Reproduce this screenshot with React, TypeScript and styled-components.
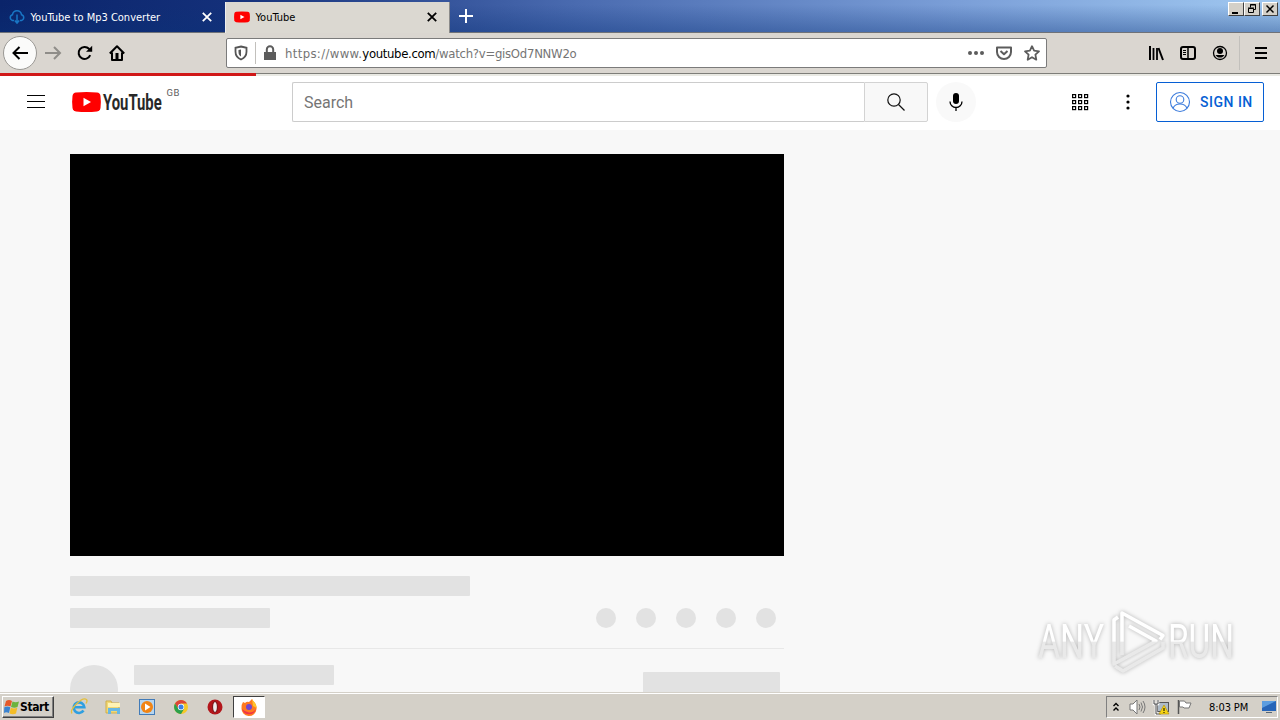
import React from 'react';
import styled, { createGlobalStyle } from 'styled-components';

const Global = createGlobalStyle`
  *{box-sizing:border-box}
  body{margin:0;overflow:hidden;background:#f8f8f8;}
  svg{display:block;overflow:visible;flex:none}
`;
const tahoma = `"DejaVu Sans Condensed","DejaVu Sans",sans-serif`;

const Screen = styled.div`width:1280px;height:720px;display:flex;flex-direction:column;overflow:hidden;position:relative;font-family:${tahoma};`;
const TitleBar = styled.div`
  height:33px;display:flex;flex:none;border-bottom:1px solid #6f7278;
  background:linear-gradient(180deg,rgba(10,36,106,0) 0%,rgba(10,36,106,0) 15%,rgba(10,50,120,.38) 100%),linear-gradient(90deg,#0a246a 0%,#14307a 18%,#4a6bb0 45%,#7b9fd8 75%,#a0c8f0 100%);
`;
const Tab = styled.div<{ $active?: boolean }>`
  width:225px;display:flex;align-items:center;padding:2px 13px 0 9px;font-size:11px;
  color:${p => (p.$active ? '#000' : '#fff')};
  ${p => p.$active && 'background:#dbd8d1;height:33px;margin-top:2px;padding:0 12px 3px 8px;border-left:1px solid #eee;border-right:1px solid #8a8a8a;'}
`;
const TabTitle = styled.span<{ $gap: number }>`flex:1;margin-left:${p => p.$gap}px;white-space:nowrap;`;
const NewTab = styled.div`padding:9px 0 0 9px;flex:1;`;
const WindowButtons = styled.div`display:flex;padding:2px 2px 0 0;`;
const WinButton = styled.div<{ $gap?: boolean }>`
  width:16px;height:14px;background:#d4d0c8;border:1px solid;border-color:#fff #404040 #404040 #fff;
  margin-left:${p => (p.$gap ? 2 : 0)}px;display:flex;align-items:center;justify-content:center;
`;
const Toolbar = styled.div`
  height:41px;flex:none;display:flex;align-items:center;background:#dad6d0;border-bottom:1px solid #7e7e79;padding-left:3px;
`;
const ToolButton = styled.div<{ $w?: number }>`width:${p => p.$w ?? 32}px;height:${p => p.$w ?? 33}px;display:flex;align-items:center;justify-content:center;`;
const BackButton = styled(ToolButton)`border-radius:50%;background:#fbfbfa;border:1px solid #9a9894;`;
const AddressBar = styled.div`
  width:821px;height:30px;margin:0 93px;background:#fff;border:1px solid #7b7b7b;border-radius:2px;display:flex;align-items:center;padding:0 6px;
`;
const Divider = styled.div<{ $h: number; $m: string }>`width:1px;height:${p => p.$h}px;background:#c2c0bc;margin:${p => p.$m};`;
const Url = styled.div`flex:1;margin-left:7px;font-size:13px;color:#757575;white-space:nowrap;display:flex;`;
const UrlPart = styled.span<{ $spacing: number; $strong?: boolean }>`letter-spacing:${p => p.$spacing}px;${p => p.$strong && 'color:#000;'}`;
const AddressActions = styled.div`display:flex;gap:12px;`;
const Header = styled.header`height:56px;flex:none;background:#fff;border-top:2px solid #e9e9e3;display:flex;align-items:center;position:relative;padding:0 16px 2px 27px;`;
const Progress = styled.div`position:absolute;left:0;top:-3px;width:256px;height:3px;background:#d01818;`;
const Logo = styled.div`margin-left:27px;width:108px;display:flex;align-items:center;position:relative;`;
const Country = styled.span`position:absolute;left:94.500px;top:-4px;font:9.500px/9px Roboto,sans-serif;color:#606060;letter-spacing:.5px;`;
const SearchBox = styled.div`margin-left:112px;width:572px;height:40px;border:1px solid #ccc;border-right:0;border-radius:2px 0 0 2px;padding-left:11px;font:16px/39px Roboto,sans-serif;color:#757575;`;
const SearchButton = styled.div`width:64px;height:40px;background:#f8f8f8;border:1px solid #d3d3d3;border-radius:0 2px 2px 0;display:flex;align-items:center;justify-content:center;`;
const Mic = styled.div`width:40px;height:40px;border-radius:50%;background:#f9f9f9;margin-left:8px;display:flex;align-items:center;justify-content:center;`;
const HeaderActions = styled.div`margin-left:auto;display:flex;align-items:center;`;
const SignIn = styled.div`width:108px;height:40px;margin-left:16px;border:1px solid #065fd4;border-radius:2px;display:flex;align-items:center;padding-left:11px;gap:8px;font:500 14px Roboto,sans-serif;letter-spacing:.5px;color:#065fd4;white-space:nowrap;`;
const Page = styled.main`flex:1;min-height:0;overflow:hidden;background:#f8f8f8;padding:24px 0 0 70px;`;
const Column = styled.div`width:714px;`;
const Player = styled.div`height:402px;background:#000;margin-bottom:20px;`;
const Block = styled.div<{ $w: number; $h?: number }>`width:${p => p.$w}px;height:${p => p.$h ?? 20}px;background:#e2e2e2;border-radius:1px;`;
const MetaRow = styled.div`display:flex;justify-content:space-between;margin-top:12px;padding-right:8px;`;
const Dots = styled.div`display:flex;gap:20px;`;
const Circle = styled.div<{ $d: number }>`width:${p => p.$d}px;height:${p => p.$d}px;border-radius:50%;background:#e2e2e2;`;
const OwnerRow = styled.div`display:flex;margin-top:20px;border-top:1px solid #e8e8e8;padding:16px 4px 0 0;`;
const OwnerName = styled.div`margin-left:16px;flex:1;`;
const Subscribe = styled.div`padding-top:7px;`;
const Taskbar = styled.footer`height:28px;flex:none;background:#d4d0c8;border-top:1px solid #d4d0c8;box-shadow:inset 0 1px #fff;display:flex;align-items:center;padding:1px 2px 0;`;
const Start = styled.div`width:52px;height:22px;background:#d4d0c8;border:1px solid;border-color:#fff #404040 #404040 #fff;box-shadow:inset -1px -1px #808080;display:flex;align-items:center;padding-left:1px;gap:1px;font:bold 12px ${tahoma};letter-spacing:-.4px;white-space:nowrap;`;
const Launch = styled.div`display:flex;margin-left:8px;`;
const TaskIcon = styled.div<{ $active?: boolean }>`
  width:34px;height:22px;display:flex;align-items:center;justify-content:center;
  ${p => p.$active && 'width:32px;margin-left:1px;background:#fff;border:1px solid;border-color:#404040 #fff #fff #404040;'}
`;
const Tray = styled.div`margin-left:auto;width:172px;height:22px;border:1px solid;border-color:#808080 #fff #fff #808080;display:flex;align-items:center;padding-left:5px;`;
const TrayItem = styled.div<{ $gap: number }>`margin-left:${p => p.$gap}px;`;
const Clock = styled.span`font-size:11px;letter-spacing:-.1px;width:44px;margin-left:17px;white-space:nowrap;`;
const MenuDots = styled.div`margin:0 10px 0 38px;`;
const Watermark = styled.div`position:absolute;left:1030px;top:602px;filter:drop-shadow(0 0 2px rgba(0,0,0,.28));`;

const Close = ({ c }: { c: string }) => <svg width="10" height="10" viewBox="0 0 10 10"><path d="M.8.8l8.4 8.4M9.200.8L.8 9.200" stroke={c} strokeWidth="1.800" /></svg>;
const Arrow = ({ c, flip }: { c: string; flip?: boolean }) => (
  <svg width="16" height="14" viewBox="0 0 16 14"><path d={flip ? 'M0 7h15M9 1l6 6-6 6' : 'M16 7H1.500M7.500 1l-6 6 6 6'} fill="none" stroke={c} strokeWidth="2" /></svg>
);
const Play = ({ w, h }: { w: number; h: number }) => (
  <svg width={w} height={h} viewBox="0 0 29 20"><path d="M4 .6Q14.500-.6 25 .6q3 .4 3.500 3.400.8 6 0 12-.5 3-3.500 3.400-10.500 1.200-21 0-3-.4-3.500-3.400-.8-6 0-12Q1 1 4 .6z" fill="#f00" /><path d="M11.500 5.700v8.600L19 10z" fill="#fff" /></svg>
);

export default function App() {
  return (
    <Screen>
      <Global />
      <TitleBar>
        <Tab>
          <svg width="16" height="14" viewBox="0 0 16 14" fill="none" stroke="#1976c5" strokeWidth="1.500"><path d="M5 10.500H3.500a3 3 0 010-5.800C4 2 6 .8 8 .8s4 1.200 4.500 3.900a3 3 0 010 5.800H11M8 4.500V13M5.800 10.500L8 13l2.200-2.500" /></svg>
          <TabTitle $gap={5.500}>YouTube to Mp3 Converter</TabTitle><Close c="#fff" />
        </Tab>
        <Tab $active><Play w={16} h={12} /><TabTitle $gap={5.500}>YouTube</TabTitle><Close c="#000" /></Tab>
        <NewTab><svg width="14" height="14" viewBox="0 0 14 14"><path d="M7 0v14M0 7h14" stroke="#fff" strokeWidth="2" /></svg></NewTab>
        <WindowButtons>
          <WinButton><svg width="10" height="9"><path d="M1 7h6v2H1z" /></svg></WinButton>
          <WinButton><svg width="10" height="10" fill="none" stroke="#000"><path d="M3.500 3.500v-3h5v5h-2M3 1h6M1.500 4.500h5v4h-5zM1 4h6" /></svg></WinButton>
          <WinButton $gap><svg width="8" height="8"><path d="M.5.5l7 7M7.500.5l-7 7" stroke="#000" strokeWidth="1.500" /></svg></WinButton>
        </WindowButtons>
      </TitleBar>
      <Toolbar>
        <BackButton $w={34}><Arrow c="#000" /></BackButton>
        <ToolButton><Arrow c="#8f8d89" flip /></ToolButton>
        <ToolButton><svg width="16" height="16" viewBox="0 0 16 16"><path d="M13.200 10.200A6 6 0 1112 3.800l1.500 1.500" fill="none" stroke="#000" strokeWidth="2" /><path d="M15.200.8v6H9z" /></svg></ToolButton>
        <ToolButton><svg width="16" height="16" viewBox="0 0 16 16"><path d="M.8 8.500L8 1.300l7.200 7.200M3 7.500V15h10V7.500" fill="none" stroke="#000" strokeWidth="2" strokeLinejoin="round" /><path d="M6.500 8h3v7h-3z" /></svg></ToolButton>
        <AddressBar>
          <svg width="16" height="16" viewBox="0 0 16 16"><path d="M8 1.500l5.500 1.300v4c0 3.500-2 6.200-5.500 7.700-3.500-1.500-5.500-4.200-5.500-7.700v-4z" fill="none" stroke="#555" strokeWidth="1.800" /><path d="M8 4.500L5.500 5v2c0 2 .8 3.500 2.500 4.500z" fill="#555" /></svg>
          <Divider $h={22} $m="0 6px" />
          <svg width="16" height="16" viewBox="0 0 16 16"><path d="M2 7h12v8H2z" fill="#5c5c5c" /><path d="M4.800 8V4.500a3.200 3.200 0 016.400 0V8" fill="none" stroke="#5c5c5c" strokeWidth="2" /></svg>
          <Url><UrlPart $spacing={0.35}>https://www.</UrlPart><UrlPart $spacing={-0.35} $strong>youtube.com</UrlPart><UrlPart $spacing={-0.27}>/watch?v=gisOd7NNW2o</UrlPart></Url>
          <AddressActions>
            <svg width="16" height="16" fill="#5c5c5c"><circle cx="2" cy="8" r="2" /><circle cx="8" cy="8" r="2" /><circle cx="14" cy="8" r="2" /></svg>
            <svg width="16" height="16" fill="none" stroke="#5c5c5c" strokeWidth="2"><path d="M1 2.500h14V7A7 7 0 011 7zM4.500 6L8 9.300 11.500 6" strokeLinejoin="round" /></svg>
            <svg width="16" height="16" fill="none" stroke="#5c5c5c" strokeWidth="1.800"><path d="M8 1.200l2.100 4.500 4.900.6-3.600 3.400.9 5L8 12.200l-4.300 2.500.9-5L1 6.300l4.900-.6z" strokeLinejoin="round" /></svg>
          </AddressActions>
        </AddressBar>
        <ToolButton><svg width="16" height="16" stroke="#000" strokeWidth="2"><path d="M2 1v14" /><path d="M5.500 3v12M9 3v12" strokeWidth="1.800" /><path d="M10.500 3l4.500 12" /></svg></ToolButton>
        <ToolButton><svg width="16" height="16" fill="none" stroke="#000"><rect x="1" y="2" width="14" height="12" rx="2" strokeWidth="2" /><path d="M8 2v12" strokeWidth="1.500" /><path d="M3 5.500h3M3 7.500h3M3 9.500h3" /></svg></ToolButton>
        <ToolButton><svg width="16" height="16"><circle cx="8" cy="8" r="6.500" fill="none" stroke="#000" strokeWidth="1.300" /><circle cx="8" cy="6" r="3" /><path d="M3.500 10h9a5.200 5.200 0 01-9 0z" /></svg></ToolButton>
        <Divider $h={34} $m="0 5px 0 3px" />
        <ToolButton><svg width="12" height="12"><path d="M0 1h12M0 6h12M0 11h12" stroke="#000" strokeWidth="2" /></svg></ToolButton>
      </Toolbar>
      <Header>
        <Progress />
        <svg width="18" height="14"><path d="M0 .5h18M0 6.500h18M0 12.500h18" stroke="#030303" /></svg>
        <Logo>
          <Play w={29} h={20} />
          <svg width="60" height="20"><text transform="translate(2 17.500) scale(.675 1)" fontFamily="Roboto" fontWeight="700" fontSize="22" fill="#282828">YouTube</text></svg>
          <Country>GB</Country>
        </Logo>
        <SearchBox>Search</SearchBox>
        <SearchButton><svg width="18" height="18" fill="none" stroke="#111" strokeWidth="1.200"><circle cx="7" cy="7" r="6.200" /><path d="M11.500 11.500l6 6" /></svg></SearchButton>
        <Mic><svg width="14" height="18"><rect x="4" y="0" width="6" height="11" rx="3" /><path d="M1 8.500a6 6 0 0012 0M7 14.500V18" fill="none" stroke="#000" strokeWidth="1.300" /></svg></Mic>
        <HeaderActions>
          <svg width="16" height="16" fill="none" stroke="#000" strokeWidth="1.200">{[0, 6, 12].flatMap(y => [0, 6, 12].map(x => <rect key={`${x}-${y}`} x={x + .6} y={y + .6} width="3" height="3" />))}</svg>
          <MenuDots><svg width="4" height="16"><circle cx="2" cy="2" r="1.600" /><circle cx="2" cy="8" r="1.600" /><circle cx="2" cy="14" r="1.600" /></svg></MenuDots>
          <SignIn>
            <svg width="24" height="24" fill="none" stroke="#3b7bdc" strokeWidth="1.100"><circle cx="12" cy="12" r="9.500" /><circle cx="12" cy="9.500" r="3.800" /><path d="M5 18.500c1-3 4-4.500 7-4.500s6 1.500 7 4.500" /></svg>
            SIGN IN
          </SignIn>
        </HeaderActions>
      </Header>
      <Page>
        <Column>
          <Player />
          <Block $w={400} />
          <MetaRow><Block $w={200} /><Dots>{[0, 1, 2, 3, 4].map(i => <Circle key={i} $d={20} />)}</Dots></MetaRow>
          <OwnerRow><Circle $d={48} /><OwnerName><Block $w={200} /></OwnerName><Subscribe><Block $w={137} $h={36} /></Subscribe></OwnerRow>
        </Column>
      </Page>
      <Taskbar>
        <Start>
          <svg width="15" height="16"><path d="M2 2q3-2 6 0L6.500 7.500q-3-1.500-6 0z" fill="#e6592a" /><path d="M8.500 2.500q3 1.500 6.500 0L13.500 8q-3 1.500-6.500 0z" fill="#6cb33e" /><path d="M.3 8.300q3-1.500 6 0L5 14q-3-1.500-5 0z" fill="#3b83d0" /><path d="M6.800 8.800q3 1.500 6.500 0L12 14.500q-3 1.500-6.500 0z" fill="#f4bd27" /></svg>
          Start
        </Start>
        <Launch>
          <TaskIcon><svg width="18" height="18"><path d="M13.500 12.500a5.300 5.300 0 11.800-3.300H4.500" fill="none" stroke="#2f9fe0" strokeWidth="2.600" /><path d="M2 15.500C-1 12 12-1.500 16.500 1.500c1 1 .5 2.500-.5 4" fill="none" stroke="#e4bf3c" strokeWidth="1.300" /></svg></TaskIcon>
          <TaskIcon><svg width="18" height="18"><path d="M2 3h5l1 2h7v10H2z" fill="#f0d875" stroke="#cfae4d" /><path d="M4 5h12v4H4z" fill="#fff3b4" /><path d="M4 10h12v6h-3v-3H7v3H4z" fill="#67b7e4" /></svg></TaskIcon>
          <TaskIcon><svg width="16" height="16"><rect x=".5" y=".5" width="15" height="15" fill="#b6d5ef" stroke="#427bb8" /><circle cx="8" cy="8" r="6" fill="#f18414" /><path d="M6 4.500v7L11.500 8z" fill="#fff" /></svg></TaskIcon>
          <TaskIcon><svg width="14" height="14" viewBox="0 0 14 14"><circle cx="7" cy="7" r="7" fill="#f5c828" /><path d="M1 3.500a7 7 0 0112 0H7L4 8.500z" fill="#dd4538" /><path d="M1 3.500A7 7 0 007 14l3-5H4.500z" fill="#2ba04c" /><circle cx="7" cy="7" r="3.200" fill="#fff" /><circle cx="7" cy="7" r="2.500" fill="#3b7fe5" /></svg></TaskIcon>
          <TaskIcon><svg width="16" height="16"><circle cx="8" cy="8" r="7.500" fill="#b3161b" /><ellipse cx="8" cy="8" rx="2.400" ry="5.500" fill="#eee" stroke="#6d0c10" /></svg></TaskIcon>
          <TaskIcon $active><svg width="16" height="16"><path d="M2 3l2 1q2-2 4-1l3-3q1 2 3 4 2 3 1.500 6a7.500 7.500 0 01-15-1Q.5 5 2 3z" fill="#ff7a21" /><path d="M11 0q1 2 3 4 2 3 1.500 5L12 7z" fill="#ffc52a" /><path d="M1 10a7.300 7.300 0 0014 0q-3 4-7 3.500T1 10z" fill="#ef3448" /><circle cx="8" cy="8" r="3" fill="#7048d0" /></svg></TaskIcon>
        </Launch>
        <Tray>
          <svg width="8" height="11" fill="none" stroke="#000" strokeWidth="1.400"><path d="M1.500 4l2.500-2.500L6.500 4M1.500 8.500L4 6l2.500 2.500" /></svg>
          <TrayItem $gap={9}><svg width="17" height="16" fill="none" stroke="#777"><path d="M1 5h3l4-4v14l-4-4H1z" fill="#fff" /><path d="M10 5q2 3 0 6M12 3.500q3 4.500 0 9M14 2q4 6 0 12" /></svg></TrayItem>
          <TrayItem $gap={7}><svg width="16" height="16"><rect x="4.500" y="3.500" width="11" height="9" fill="#aebbc7" stroke="#555" /><path d="M1 1v4h4V1M3 5v10h5" fill="none" stroke="#fff" strokeWidth="2.500" /><path d="M1 1v4h4V1M3 5v10h5" fill="none" stroke="#444" /><path d="M11 6l5 9H6z" fill="#f6d414" stroke="#b18c00" strokeWidth=".6" /><path d="M11 9v3M11 13v1" stroke="#000" /></svg></TrayItem>
          <TrayItem $gap={7}><svg width="16" height="16"><path d="M2.500 1v14" stroke="#555" strokeWidth="1.500" /><path d="M3.500 2h5l1.500 2h5l-2 5H8L7 8H3.500z" fill="#fff" stroke="#777" /></svg></TrayItem>
          <Clock>8:03 PM</Clock>
          <TrayItem $gap={8}><svg width="16" height="14"><path d="M1 1h14v10H1z" fill="#2765b8" /><path d="M1 1h14L1 8z" fill="#5c9de0" /><path d="M5 12h6v1H5z" fill="#567" /></svg></TrayItem>
        </Tray>
      </Taskbar>
      <Watermark>
        <svg width="210" height="80">
          <defs><linearGradient id="fade" gradientUnits="userSpaceOnUse" x1="0" y1="0" x2="0" y2="80"><stop offset=".49" stopColor="#fff" /><stop offset=".5" stopColor="#e9e9e9" /></linearGradient></defs>
          <g fill="url(#fade)" fontFamily="Roboto" fontSize="49">
            <text x="8" y="56" textLength="66" lengthAdjust="spacingAndGlyphs">ANY</text>
            <text x="138" y="56" textLength="66" lengthAdjust="spacingAndGlyphs">RUN</text>
          </g>
          <g fill="none" stroke="url(#fade)" strokeWidth="3.500" strokeLinejoin="round"><path d="M92 53V11l41 22.500-3 4" /><path d="M99 24l27 15-42 23V18l4-3" /><path d="M85 64l8 5 40-23v-6" /></g>
        </svg>
      </Watermark>
    </Screen>
  );
}
